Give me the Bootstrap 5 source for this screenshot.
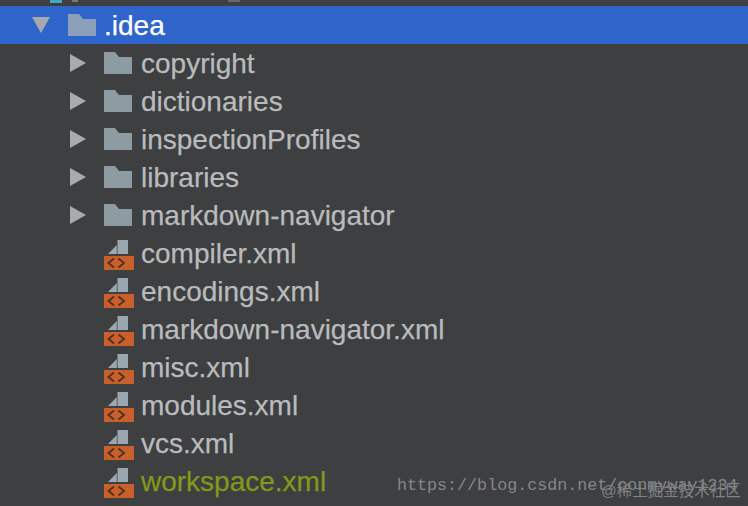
<!DOCTYPE html>
<html lang="en">

<head>
    <meta charset="UTF-8">
    <meta name="viewport" content="width=device-width, initial-scale=1.0">
    <link href="https://cdn.jsdelivr.net/npm/bootstrap@5.3.3/dist/css/bootstrap.min.css" rel="stylesheet">
    <script src="https://cdn.jsdelivr.net/npm/bootstrap@5.3.3/dist/js/bootstrap.bundle.min.js"></script>
    <title>.idea</title>
    <style>
        html, body {
            height: 100%;
        }
        body {
            background-color: #3d3f41;
            overflow: hidden;
            font-family: "Liberation Sans", Arial, sans-serif;
        }
        .tree-wrap {
            position: relative;
            height: 506px;
            overflow: hidden;
        }
        .top-strip {
            height: 6px;
            padding-left: 50px;
            gap: 10px;
        }
        .strip-blue {
            width: 12px;
            height: 3px;
            background-color: #45a5c4;
        }
        .strip-grey {
            width: 6px;
            height: 2px;
            background-color: #77797b;
        }
        .strip-grey-2 {
            width: 12px;
            height: 2px;
            margin-left: 140px;
            background-color: #66686a;
        }
        .tree-row {
            height: 38px;
            font-size: 28px;
            line-height: 38px;
            color: #b9bbbc;
            -webkit-text-stroke: 0.25px currentColor;
        }
        .tree-row.selected {
            background-color: #2f65ca;
            color: #fff;
        }
        .tree-row.changed {
            color: #7f9a1b;
        }
        .lvl-1 {
            padding-left: 32px;
        }
        .lvl-2 {
            padding-left: 70px;
        }
        .arrow-slot {
            flex: 0 0 34px;
            width: 34px;
        }
        .lvl-1 .arrow-slot {
            flex-basis: 36px;
            width: 36px;
        }
        .no-arrow {
            padding-left: 104px;
        }
        .no-arrow .icon-slot {
            padding-top: 4px;
        }
        .icon-slot {
            flex: 0 0 37px;
            width: 37px;
        }
        .lvl-1 .icon-slot {
            flex-basis: 36px;
            width: 36px;
        }
        .row-label {
            padding-top: 1px;
            white-space: nowrap;
        }
        .mark-url {
            position: absolute;
            left: 397px;
            top: 475px;
            font-family: "Liberation Mono", monospace;
            font-size: 16.7px;
            line-height: 22px;
            color: #85878a;
            white-space: nowrap;
        }
        .mark-site {
            position: absolute;
            left: 601px;
            top: 480px;
            font-family: "Liberation Sans", "Noto Sans CJK SC", sans-serif;
            font-size: 15.5px;
            line-height: 22px;
            color: #808285;
            white-space: nowrap;
        }
    </style>
</head>

<body>
    <svg width="0" height="0" class="d-block position-absolute">
        <defs>
            <symbol id="i-folder" viewBox="0 0 28 22">
                <path d="M0 0H11L15 5H28V22H0Z"/>
            </symbol>
            <symbol id="i-right" viewBox="0 0 16 18">
                <path d="M0 0L16 9L0 18Z"/>
            </symbol>
            <symbol id="i-down" viewBox="0 0 18 16">
                <path d="M0 0H18L9 16Z"/>
            </symbol>
            <symbol id="i-xml" viewBox="0 0 30 30">
                <path d="M4 14L12.800 5V14ZM13.500 0H24V14H13.500Z" fill="#9aa7b0"/>
                <rect x="0" y="16" width="30" height="14" fill="#c9602b"/>
                <path d="M10 18.500L4.500 23L10 27.500M14.500 18.500L20 23L14.500 27.500" fill="none" stroke="#51301e" stroke-width="1.900"/>
            </symbol>
        </defs>
    </svg>

    <div class="tree-wrap">
        <div class="top-strip d-flex align-items-start">
            <span class="strip-blue"></span>
            <span class="strip-grey"></span>
            <span class="strip-grey-2"></span>
        </div>

        <div class="tree-row selected lvl-1 d-flex align-items-center">
            <span class="arrow-slot d-flex"><svg width="18" height="16" fill="#a6a9ae"><use href="#i-down"/></svg></span>
            <span class="icon-slot d-flex"><svg width="28" height="22" fill="#8ba0b8"><use href="#i-folder"/></svg></span>
            <span class="row-label">.idea</span>
        </div>

        <div id="tree"></div>

        <div class="mark-url">https://blog.csdn.net/conmyway1234</div>
        <div class="mark-site">@稀土掘金技术社区</div>
    </div>

    <script>
        var folders = ['copyright', 'dictionaries', 'inspectionProfiles', 'libraries', 'markdown-navigator'];
        var files = ['compiler.xml', 'encodings.xml', 'markdown-navigator.xml', 'misc.xml', 'modules.xml', 'vcs.xml', 'workspace.xml'];
        var html = '';

        folders.forEach(function (name) {
            html += '<div class="tree-row lvl-2 d-flex align-items-center">' +
                '<span class="arrow-slot d-flex"><svg width="16" height="18" fill="#a9abad"><use href="#i-right"/></svg></span>' +
                '<span class="icon-slot d-flex"><svg width="28" height="22" fill="#8d9ba3"><use href="#i-folder"/></svg></span>' +
                '<span class="row-label">' + name + '</span></div>';
        });

        files.forEach(function (name) {
            var cls = name === 'workspace.xml' ? ' changed' : '';
            html += '<div class="tree-row no-arrow d-flex align-items-center' + cls + '">' +
                '<span class="icon-slot d-flex"><svg width="30" height="30"><use href="#i-xml"/></svg></span>' +
                '<span class="row-label">' + name + '</span></div>';
        });

        document.getElementById('tree').innerHTML = html;
    </script>
</body>

</html>
